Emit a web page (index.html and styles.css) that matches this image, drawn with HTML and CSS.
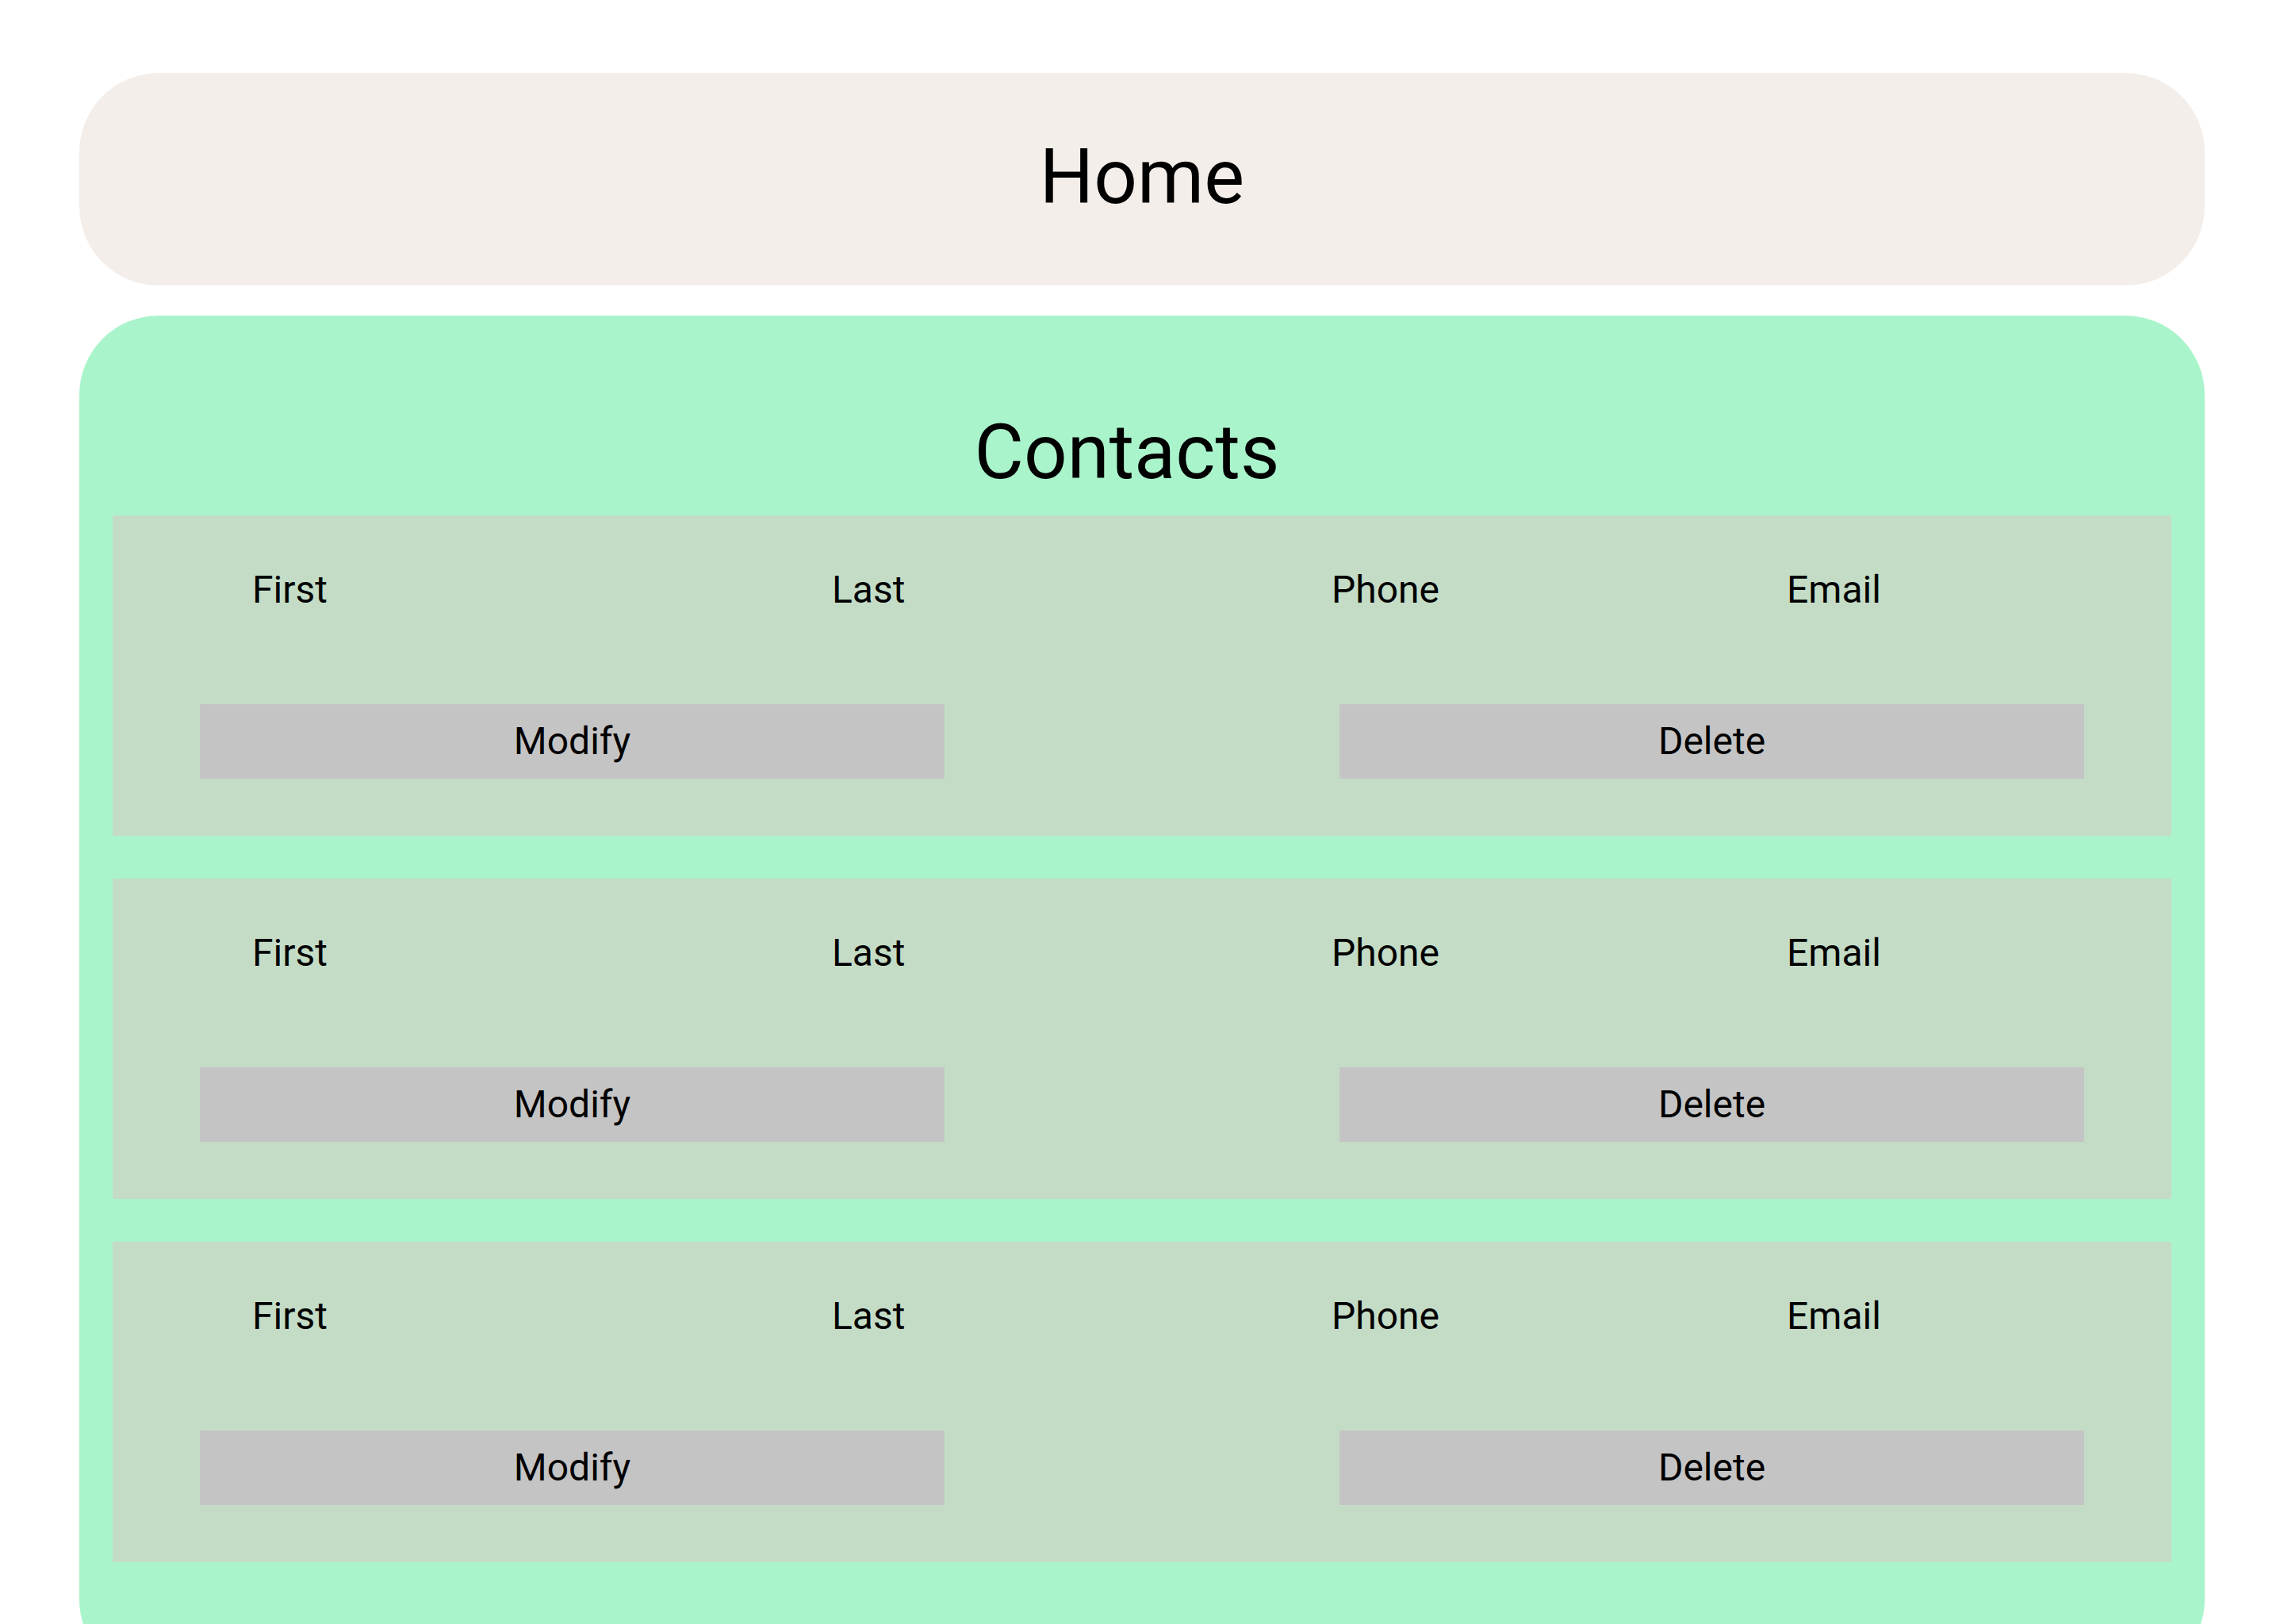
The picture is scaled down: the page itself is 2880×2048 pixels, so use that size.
FILE: index.html
```html
<!DOCTYPE html>
<html lang="en">
<head>
<meta charset="utf-8">
<title>Home</title>
<link rel="stylesheet" href="styles.css">
</head>
<body>
<header class="home-bar"><h1 class="home-title">Home</h1></header>
<main class="contacts">
  <h2 class="contacts-title">Contacts</h2>
  <div class="contact-list">
    <article class="contact-card">
      <div class="contact-fields"><span>First</span><span>Last</span><span>Phone</span><span>Email</span></div>
      <div class="contact-actions"><button class="btn">Modify</button><button class="btn">Delete</button></div>
    </article>
    <article class="contact-card">
      <div class="contact-fields"><span>First</span><span>Last</span><span>Phone</span><span>Email</span></div>
      <div class="contact-actions"><button class="btn">Modify</button><button class="btn">Delete</button></div>
    </article>
    <article class="contact-card">
      <div class="contact-fields"><span>First</span><span>Last</span><span>Phone</span><span>Email</span></div>
      <div class="contact-actions"><button class="btn">Modify</button><button class="btn">Delete</button></div>
    </article>
  </div>
</main>
</body>
</html>
```
FILE: styles.css
```css
body {
  margin: 0;
  padding: 92px 100px 0;
  background: #ffffff;
  color: #000000;
  font-family: Roboto, "Noto Sans", sans-serif;
}

.home-bar {
  height: 268px;
  box-sizing: border-box;
  padding-top: 75px;
  border-radius: 100px;
  background: #f3eeea;
  text-align: center;
}

.home-title {
  margin: 0;
  font-size: 96px;
  font-weight: 400;
  line-height: 112px;
}

.contacts {
  margin-top: 38px;
  padding: 116px 42px 147px;
  border-radius: 100px;
  background: #aaf4cc;
}

.contacts-title {
  margin: 0 0 24px;
  padding-right: 38px;
  text-align: center;
  font-size: 96px;
  font-weight: 400;
  line-height: 112px;
}

.contact-list {
  display: flex;
  flex-direction: column;
  gap: 54px;
}

.contact-card {
  height: 404px;
  box-sizing: border-box;
  padding: 66px 110px 72px;
  display: flex;
  flex-direction: column;
  justify-content: space-between;
  background: #c4dcc6;
}

.contact-fields {
  display: grid;
  grid-template-columns: 731px 630px 574px 1fr;
  padding-left: 66px;
  font-size: 48px;
  line-height: 56px;
}

.contact-actions {
  display: flex;
  justify-content: space-between;
}

.btn {
  width: 939px;
  height: 94px;
  padding: 0;
  border: 0;
  background: #c4c4c4;
  color: #000000;
  font-family: Roboto, "Noto Sans", sans-serif;
  font-size: 48px;
  font-weight: 400;
  line-height: 94px;
}
```
